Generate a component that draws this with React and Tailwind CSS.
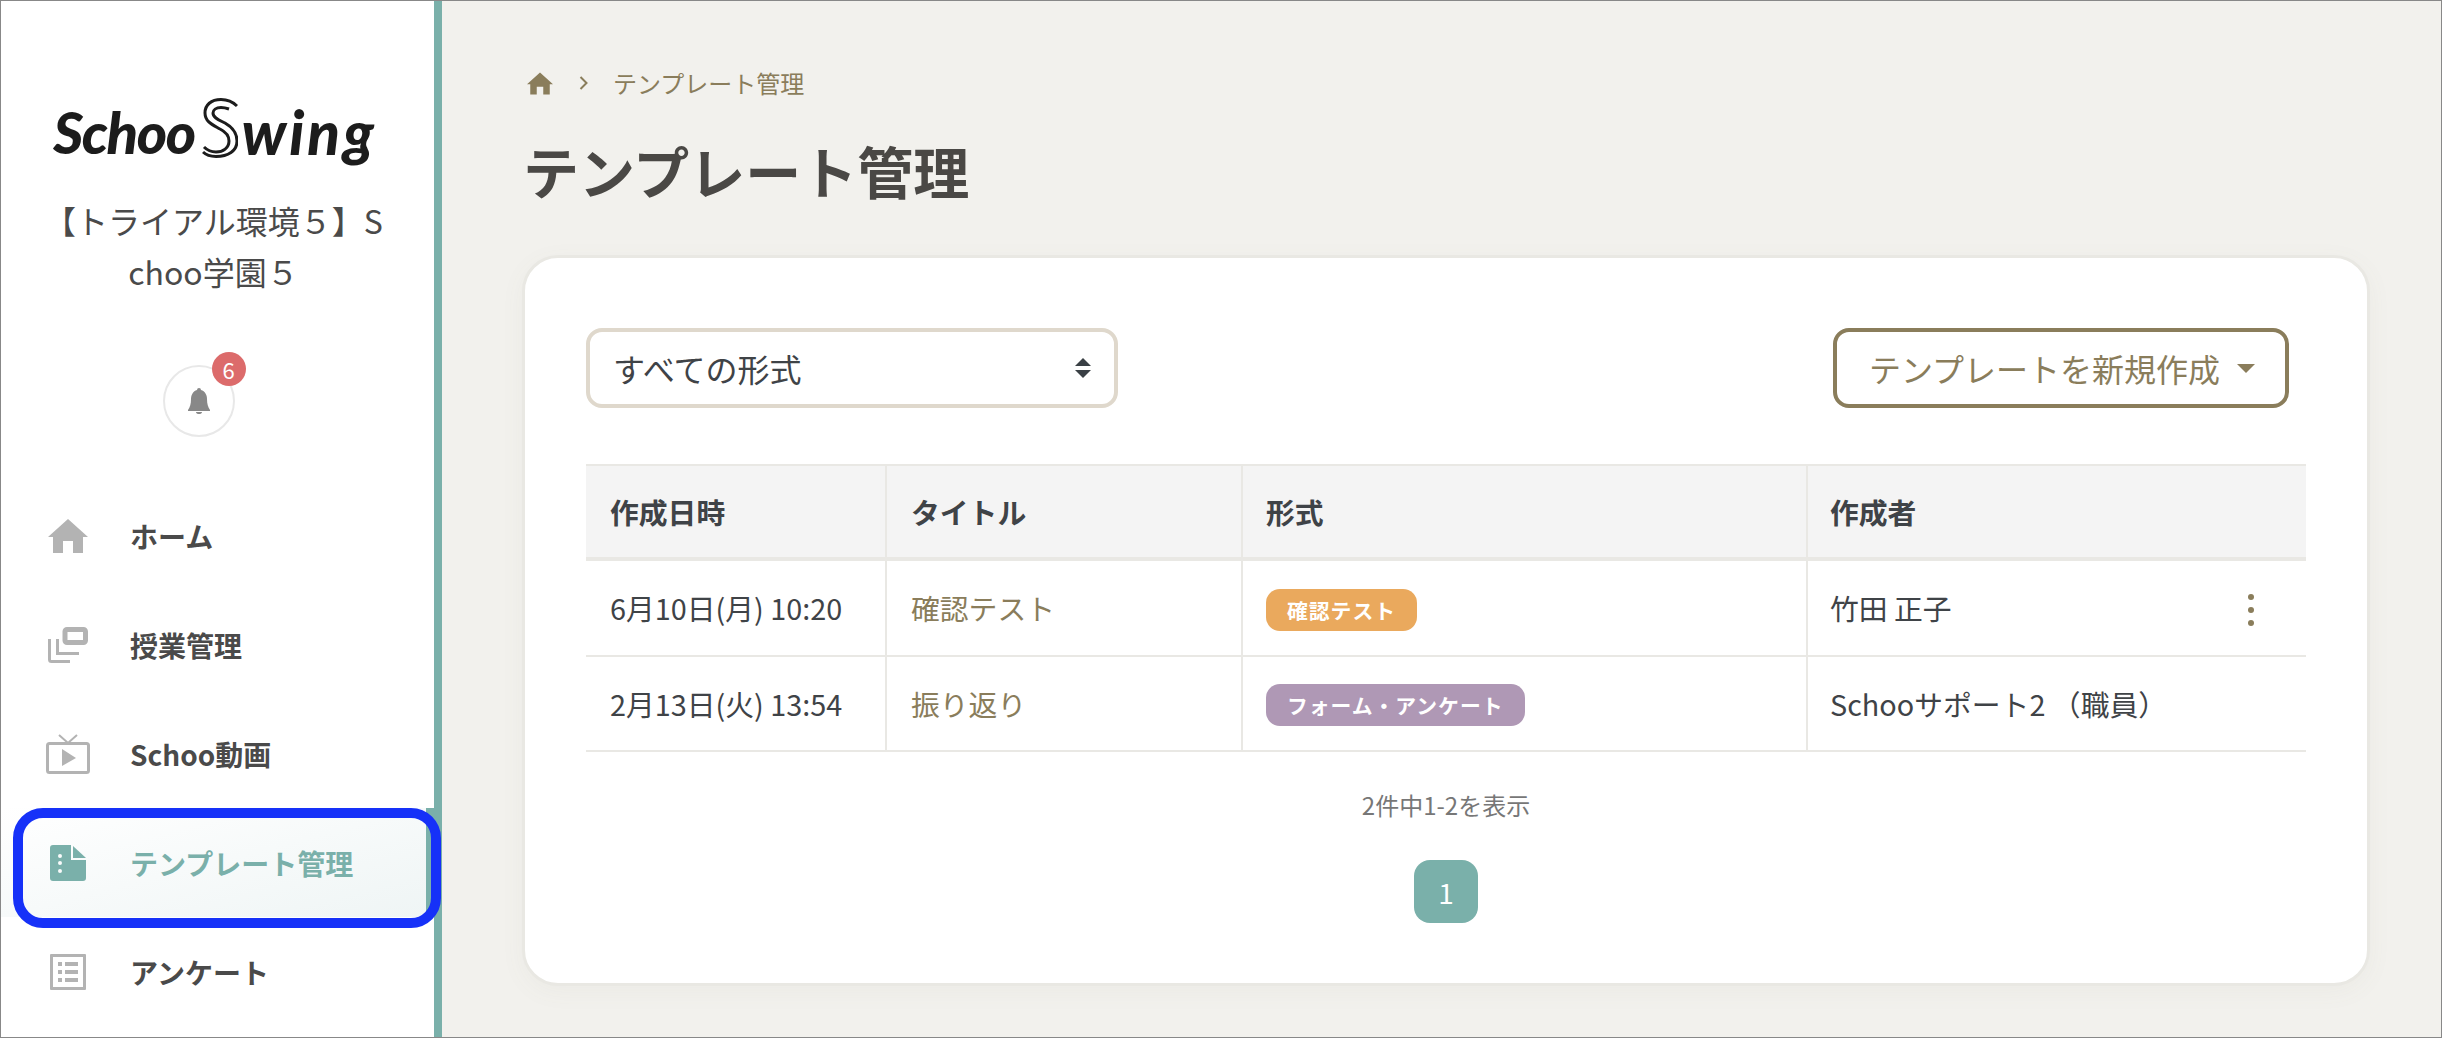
const cx = (...a) => a.join(" ");

const Home = ({ className }) => (
  <svg viewBox="0 0 40 34" className={className} fill="currentColor">
    <path d="M20 0 L40 18 L35 18 L35 34 L25 34 L25 22 L15 22 L15 34 L5 34 L5 18 L0 18 Z" />
  </svg>
);
const Slides = ({ className }) => (
  <svg viewBox="0 0 40 36" className={className} fill="none" stroke="currentColor">
    <rect x="17" y="2.500" width="20.500" height="13" rx="2" strokeWidth="5" />
    <path d="M1.500 12 V32.500 a2 2 0 0 0 2 2 H22" strokeWidth="3" />
    <path d="M9.500 12 V26.500 H31" strokeWidth="3" />
  </svg>
);
const Tv = ({ className }) => (
  <svg viewBox="0 0 44 40" className={className} fill="none" stroke="currentColor">
    <rect x="1.500" y="9.500" width="41" height="29" rx="2" strokeWidth="3" />
    <path d="M13 1 L22 9 L31 1" strokeWidth="2" />
    <path d="M16 15 L30 24 L16 32 Z" fill="currentColor" stroke="none" />
  </svg>
);
const Doc = ({ className }) => (
  <svg viewBox="0 0 36 36" className={className} fill="currentColor">
    <path d="M3 0 H21 V15 H36 V33 a3 3 0 0 1 -3 3 H3 a3 3 0 0 1 -3 -3 V3 a3 3 0 0 1 3 -3 Z M10 9 a2 2 0 1 0 0 4 a2 2 0 1 0 0 -4 Z M10 16 a2 2 0 1 0 0 4 a2 2 0 1 0 0 -4 Z M10 24 a2 2 0 1 0 0 4 a2 2 0 1 0 0 -4 Z" fillRule="evenodd" />
    <path d="M23 1 L36 13 H23 Z" />
  </svg>
);
const List = ({ className }) => (
  <svg viewBox="0 0 36 36" className={className} fill="currentColor">
    <path fillRule="evenodd" d="M1 0 H35 a1 1 0 0 1 1 1 V35 a1 1 0 0 1 -1 1 H1 a1 1 0 0 1 -1 -1 V1 a1 1 0 0 1 1 -1 Z M3 3 V33 H33 V3 Z" />
    <rect x="8" y="8" width="4" height="4" />
    <rect x="8" y="16" width="4" height="4" />
    <rect x="8" y="24" width="4" height="4" />
    <rect x="15" y="8" width="13" height="4" />
    <rect x="15" y="16" width="13" height="4" />
    <rect x="15" y="24" width="13" height="4" />
  </svg>
);

const NAV = [
  { label: "ホーム", Icon: Home, icon: "w-10 h-[34px]" },
  { label: "授業管理", Icon: Slides, icon: "w-10 h-9" },
  { label: "Schoo動画", Icon: Tv, icon: "w-11 h-10" },
  { label: "テンプレート管理", Icon: Doc, icon: "w-9 h-9", active: true },
  { label: "アンケート", Icon: List, icon: "w-9 h-9" },
];

function Logo() {
  return (
    <div className="flex items-start justify-center h-[82px] pr-[5px]">
      <span className="font-['Lato',sans-serif] font-black italic text-[58px] leading-[58px] tracking-[-1.5px] text-[#1c1c1c] mt-[5px]">Schoo</span>
      <svg viewBox="0 0 36 60" className="w-9 h-[60px] ml-[7px] mr-[4px] shrink-0" fill="none" stroke="#1c1c1c" strokeWidth="3">
        <path d="M35 8 C30 3 25 1.500 19 1.500 C9 1.500 3 7 3 15 C3 24 11 27 18 31 C24 34 27 37 27 43 C27 50 21 54 14 54 C9 54 5 52 2 49" />
        <path d="M27 11 C24 10 21 9.500 19 9.500 C14 9.500 11 12 11 15 C11 20 17 22 23 25 C30 29 35 35 35 43 C35 53 26 58.500 14 58.500 C9 58.500 4 57 1 54" />
      </svg>
      <span className="font-['Lato',sans-serif] font-black italic text-[60px] leading-[58px] tracking-[3px] text-[#1c1c1c] mt-[5px]">wing</span>
    </div>
  );
}

function Sidebar() {
  return (
    <aside className="w-[441px] h-full shrink-0 bg-white border-r-[8px] border-[#7ab0aa] pt-[97px] flex flex-col">
      <Logo />
      <p className="mt-[15px] pl-[40px] pr-[48px] text-[32px] leading-[51px] text-[#4a4a4a] text-center break-all">【トライアル環境５】Schoo学園５</p>
      <div className="mt-[68px] flex justify-center">
        <div className="relative w-[72px] h-[72px] rounded-full border-2 border-[#e8e8e8] flex items-center justify-center mr-[38px]">
          <svg viewBox="0 0 22 26" className="w-[22px] h-[26px] text-[#888888]" fill="currentColor">
            <path d="M11 0 a2 2 0 0 1 2 2 C17 3 19 7 19 11 C19 16 20 19 22 22 V23 H0 V22 C2 19 3 16 3 11 C3 7 5 3 9 2 a2 2 0 0 1 2 -2 Z M8 24 H14 C14 25.500 12.500 26 11 26 C9.500 26 8 25.500 8 24 Z" />
          </svg>
          <span className="absolute -top-[15px] left-[47px] w-[34px] h-[34px] rounded-full bg-[#dc6b6b] text-white text-[22px] leading-[34px] text-center">6</span>
        </div>
      </div>
      <nav className="mt-[44px] flex flex-col">
        {NAV.map(({ label, Icon, icon, active }) => (
          <div
            key={label}
            className={cx(
              "h-[109px] flex items-center",
              active ? "bg-gradient-to-br from-white to-[#eff5f5] border-r-[8px] border-[#7ab0aa] text-[#7ab0aa]" : "text-[#4a4a4a]"
            )}
          >
            <div className="w-11 ml-[45px] shrink-0 flex justify-center">
              <Icon className={cx(icon, active ? "text-[#7ab0aa]" : "text-[#b3b3b3]")} />
            </div>
            <span className="ml-10 text-[28px] leading-[40px] font-bold">{label}</span>
          </div>
        ))}
      </nav>
    </aside>
  );
}

const RowCell = ({ className = "pl-6", children }) => (
  <td className={cx("text-[28.8px] leading-[40px] border-b-2 border-[#e9e8e4]", className)}>{children}</td>
);
const Head = ({ className = "pl-6", children }) => (
  <th className={cx("h-[97px] bg-[#f4f4f4] text-left text-[28.8px] leading-[40px] font-bold text-[#3f4347] border-t-2 border-b-4 border-[#e9e8e4]", className)}>{children}</th>
);

function Card() {
  return (
    <section className="w-[1848px] h-[731px] bg-white rounded-[36px] border-[3px] border-[#e9e8e3] shadow-[0_6px_24px_rgba(120,115,100,0.05)] px-[61px] pt-[70px]">
      <div className="flex items-center justify-between pr-[17px]">
        <div className="w-[532px] h-20 rounded-2xl border-4 border-[#dfd8cc] bg-white flex items-center justify-between pl-[23px] pr-[23px] text-[32px] text-[#3f4347]">
          <span>すべての形式</span>
          <svg viewBox="0 0 16 20" className="w-4 h-5 text-[#3a4045]" fill="currentColor">
            <path d="M8 0 L16 8 H0 Z M0 12 H16 L8 20 Z" />
          </svg>
        </div>
        <div className="h-20 w-[456px] rounded-2xl border-4 border-[#8a7d5b] flex items-center pl-[32px] text-[32px] text-[#8a7d5b]">
          <span>テンプレートを新規作成</span>
          <svg viewBox="0 0 18 9" className="w-[18px] h-[9px] ml-[17px] text-[#8a7d5b]" fill="currentColor">
            <path d="M0 0 H18 L9 9 Z" />
          </svg>
        </div>
      </div>
      <table className="mt-14 w-[1720px] table-fixed border-separate border-spacing-0 text-[#3f4347]">
        <colgroup>
          <col className="w-[301px]" />
          <col className="w-[356px]" />
          <col className="w-[565px]" />
          <col className="w-[498px]" />
        </colgroup>
        <thead>
          <tr>
            <Head className="pl-6 border-r-2">作成日時</Head>
            <Head className="pl-6 border-r-2">タイトル</Head>
            <Head className="pl-[23px] border-r-2">形式</Head>
            <Head className="pl-[22px]">作成者</Head>
          </tr>
        </thead>
        <tbody>
          <tr className="h-[96px]">
            <RowCell className="pl-6 border-r-2">6月10日(月) 10:20</RowCell>
            <RowCell className="pl-6 border-r-2 text-[#8a7d5b]">確認テスト</RowCell>
            <RowCell className="pl-[23px] border-r-2">
              <span className="inline-flex items-center h-[42px] mt-[3px] px-[21px] rounded-[14px] bg-[#eaa95d] text-white text-[20.8px] font-bold tracking-[1px]">確認テスト</span>
            </RowCell>
            <RowCell className="pl-[22px]">
              <div className="flex items-center justify-between pr-[51px]">
                <span>竹田 正子</span>
                <svg viewBox="0 0 8 32" className="w-2 h-8 mt-[3px] text-[#8a7d5b]" fill="currentColor">
                  <circle cx="4" cy="3" r="3" />
                  <circle cx="4" cy="16" r="3" />
                  <circle cx="4" cy="29" r="3" />
                </svg>
              </div>
            </RowCell>
          </tr>
          <tr className="h-[95px]">
            <RowCell className="pl-6 border-r-2">2月13日(火) 13:54</RowCell>
            <RowCell className="pl-6 border-r-2 text-[#8a7d5b]">振り返り</RowCell>
            <RowCell className="pl-[23px] border-r-2">
              <span className="inline-flex items-center h-[42px] px-[21px] rounded-[14px] bg-[#af98b5] text-white text-[20.8px] font-bold tracking-[1px]">フォーム・アンケート</span>
            </RowCell>
            <RowCell className="pl-[22px]">Schooサポート2 （職員）</RowCell>
          </tr>
        </tbody>
      </table>
      <p className="mt-[37px] text-center text-[24px] leading-[32px] text-[#777777]">2件中1-2を表示</p>
      <div className="mt-[39px] flex justify-center">
        <div className="w-16 h-[63px] rounded-2xl bg-[#7ab0aa] text-white text-[28px] flex items-center justify-center">1</div>
      </div>
    </section>
  );
}

function Main() {
  return (
    <main className="flex-1 h-full bg-[#f2f1ed] pl-[80px] pt-[64px]">
      <div className="flex items-center h-9 pl-[5px] text-[#8a7d5b]">
        <Home className="w-[26px] h-[23px]" />
        <svg viewBox="0 0 9 14" className="w-[9px] h-[14px] ml-[26px]" fill="none" stroke="currentColor" strokeWidth="2">
          <path d="M1.500 1 L7.500 7 L1.500 13" />
        </svg>
        <span className="ml-[25px] text-[24px] leading-9">テンプレート管理</span>
      </div>
      <h1 className="mt-[29px] pl-[1px] text-[56px] leading-[80px] font-bold text-[#4a4845]">テンプレート管理</h1>
      <div className="mt-[45px]">
        <Card />
      </div>
    </main>
  );
}

export default function App() {
  return (
    <div className="relative w-[2442px] h-[1038px] overflow-hidden border border-[#888888] flex font-['Noto_Sans_CJK_JP',sans-serif]">
      <Sidebar />
      <Main />
      <div className="absolute left-[12px] top-[807px] w-[428px] h-[120px] rounded-[30px] border-[10px] border-[#1631f8] pointer-events-none" />
    </div>
  );
}
